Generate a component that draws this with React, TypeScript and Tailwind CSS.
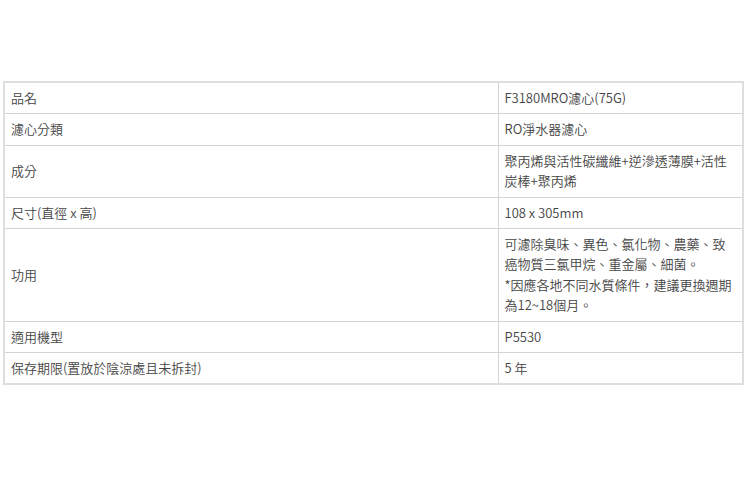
const rows: { label: string; value: string[] }[] = [
  { label: "品名", value: ["F3180MRO濾心(75G)"] },
  { label: "濾心分類", value: ["RO淨水器濾心"] },
  { label: "成分", value: ["聚丙烯與活性碳纖維+逆滲透薄膜+活性炭棒+聚丙烯"] },
  { label: "尺寸(直徑 x 高)", value: ["108 x 305mm"] },
  {
    label: "功用",
    value: [
      "可濾除臭味、異色、氯化物、農藥、致癌物質三氯甲烷、重金屬、細菌。",
      "*因應各地不同水質條件，建議更換週期為12~18個月。",
    ],
  },
  { label: "適用機型", value: ["P5530"] },
  { label: "保存期限(置放於陰涼處且未拆封)", value: ["5 年"] },
];

export default function App() {
  return (
    <div
      className="w-[750px] h-[500px] bg-white pt-[81px] pl-[3px]"
      style={{ fontFamily: '"Noto Sans CJK TC", "Noto Sans", sans-serif' }}
    >
      <table className="w-[741px] border-collapse border-2 border-[#dedede] text-[13px] font-[350] leading-[20.4px] text-[#444]">
        <tbody>
          {rows.map((r) => (
            <tr key={r.label}>
              <td className="w-[494px] border border-[#d4d4d4] px-[6px] py-[5px] align-middle">
                {r.label}
              </td>
              <td className="border border-[#d4d4d4] px-[6px] py-[5px] align-middle">
                {r.value.map((v, i) => (
                  <p key={i}>{v}</p>
                ))}
              </td>
            </tr>
          ))}
        </tbody>
      </table>
    </div>
  );
}
